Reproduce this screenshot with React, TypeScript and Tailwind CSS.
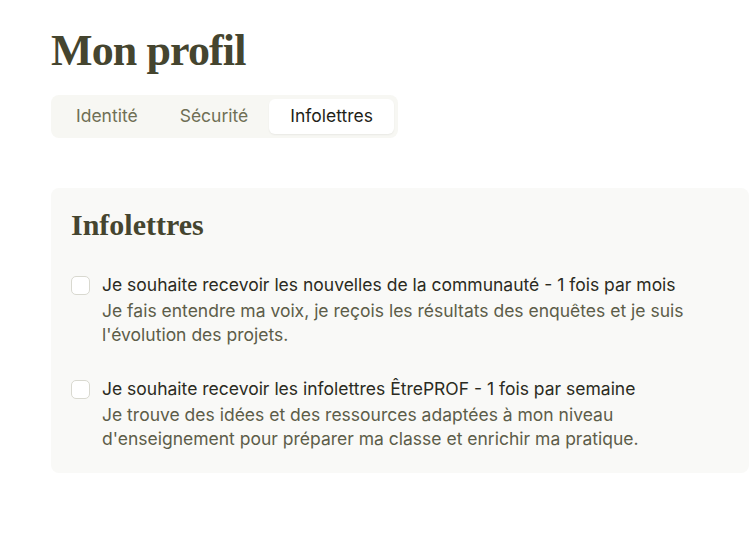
import React, { useState } from 'react';

interface Newsletter {
	id: string;
	label: string;
	description: string;
}

const newsletters: Newsletter[] = [
	{
		id: 'communaute',
		label: 'Je souhaite recevoir les nouvelles de la communauté - 1 fois par mois',
		description:
			"Je fais entendre ma voix, je reçois les résultats des enquêtes et je suis l'évolution des projets.",
	},
	{
		id: 'etreprof',
		label: 'Je souhaite recevoir les infolettres ÊtrePROF - 1 fois par semaine',
		description:
			"Je trouve des idées et des ressources adaptées à mon niveau d'enseignement pour préparer ma classe et enrichir ma pratique.",
	},
];

const tabs = ['Identité', 'Sécurité', 'Infolettres'];

export default function App() {
	const [activeTab, setActiveTab] = useState('Infolettres');
	const [checked, setChecked] = useState<Record<string, boolean>>({});

	return (
		<div className="min-h-[552px] w-[750px] overflow-hidden bg-white pl-[51px] pt-[25px] font-['Inter',sans-serif]">
			<h1 className="font-['Liberation_Serif',serif] text-[44px] font-bold leading-[52px] tracking-[-0.02em] text-[#45452f]">
				Mon profil
			</h1>

			<div className="mt-[18px] inline-flex rounded-lg bg-[#f7f7f3] p-1">
				{tabs.map((tab) => (
					<button
						key={tab}
						onClick={() => setActiveTab(tab)}
						className={
							activeTab === tab
								? 'h-[35px] rounded-md bg-white px-[21px] text-[17.5px] text-[#1f1f19] shadow-[0_1px_2px_rgba(0,0,0,0.06)]'
								: 'h-[35px] rounded-md px-[21px] text-[17.5px] text-[#6f6f55]'
						}
					>
						{tab}
					</button>
				))}
			</div>

			<section className="mt-[50px] w-[698px] rounded-lg bg-[#f9f9f7] pb-[22px] pl-5 pr-5 pt-[20px]">
				<h2 className="font-['Liberation_Serif',serif] text-[30px] font-bold leading-[34px] text-[#45452f]">
					Infolettres
				</h2>

				<div className="mt-[31px] flex flex-col gap-[30px]">
					{newsletters.map((item) => (
						<label key={item.id} className="flex cursor-pointer items-start gap-3">
							<input
								type="checkbox"
								checked={!!checked[item.id]}
								onChange={(e) => setChecked({ ...checked, [item.id]: e.target.checked })}
								className="mt-[3px] size-[19px] shrink-0 appearance-none rounded-[5px] border border-[#d9d9d0] bg-white checked:bg-[#45452f]"
							/>
							<div className="max-w-[625px] text-[17.5px] leading-6">
								<p className="text-[#2b2b22]">{item.label}</p>
								<p className="mt-[2px] text-[#5d5d49]">{item.description}</p>
							</div>
						</label>
					))}
				</div>
			</section>
		</div>
	);
}
